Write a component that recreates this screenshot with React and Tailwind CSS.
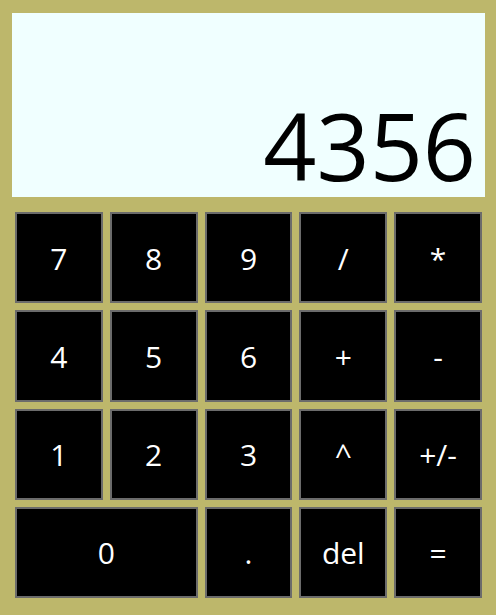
import React from 'react';

const keys = [
  { label: '7' }, { label: '8' }, { label: '9' }, { label: '/' }, { label: '*' },
  { label: '4' }, { label: '5' }, { label: '6' }, { label: '+' }, { label: '-' },
  { label: '1' }, { label: '2' }, { label: '3' }, { label: '^' }, { label: '+/-' },
  { label: '0', wide: true }, { label: '.' }, { label: 'del' }, { label: '=' },
];

const App = () => {
  return (
    <div
      className="min-h-screen bg-[#bdb76b] pt-[13px] pl-[12px] pr-[11px]"
      style={{ fontFamily: '"Open Sans", "Noto Sans", sans-serif' }}
    >
      {/* Display */}
      <div className="h-[184px] bg-[#f0ffff] flex items-end justify-end pr-[9px] pb-[5px]">
        <span className="text-[93px] leading-none text-black">4356</span>
      </div>

      {/* Keypad */}
      <div className="mt-[15px] mx-[3px] grid grid-cols-5 grid-rows-4 gap-[7px] h-[386px]">
        {keys.map((k) => (
          <button
            key={k.label}
            className={`bg-black text-white border-2 border-[#6b6b6b] text-[30px] leading-none flex items-center justify-center pt-[2px] ${
              k.wide ? 'col-span-2' : ''
            }`}
          >
            {k.label}
          </button>
        ))}
      </div>
    </div>
  );
};

export default App;
